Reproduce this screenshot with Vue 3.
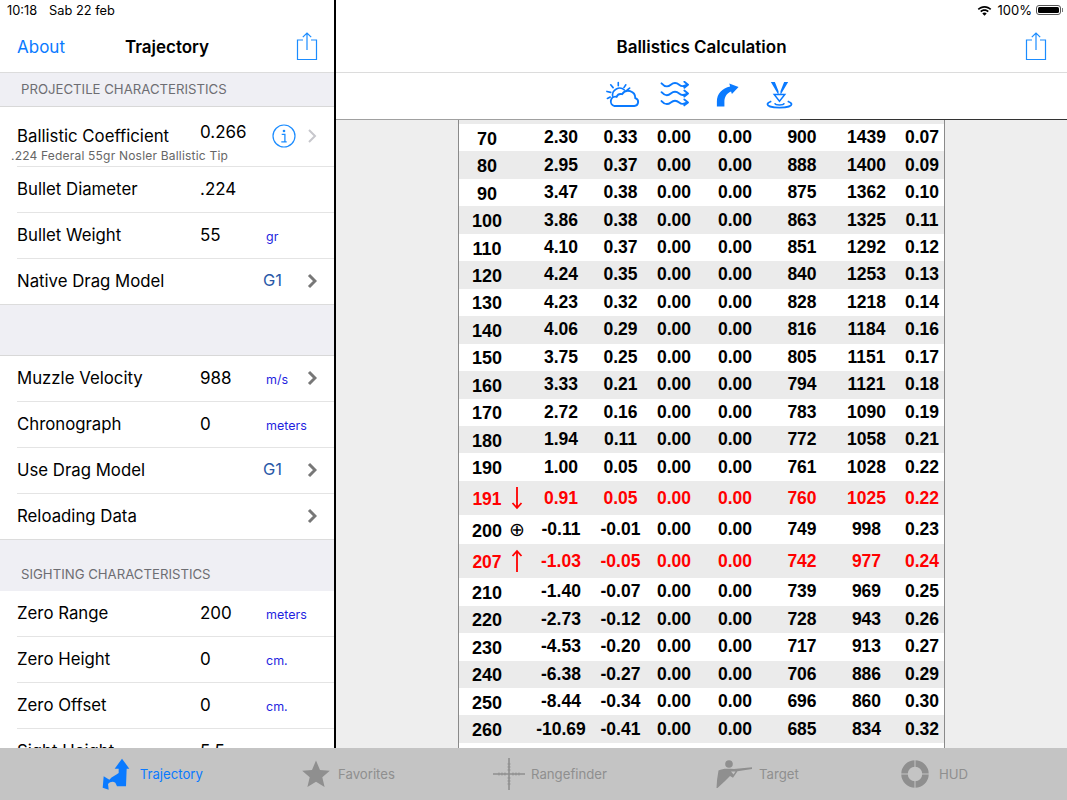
<script setup>
const groups1 = [
  { label: 'Bullet Diameter', value: '.224', unit: '' },
  { label: 'Bullet Weight', value: '55', unit: 'gr' },
]
const rows2 = [
  { label: 'Muzzle Velocity', value: '988', unit: 'm/s', chev: true },
  { label: 'Chronograph', value: '0', unit: 'meters' },
  { label: 'Use Drag Model', value: '', model: 'G1', chev: true },
  { label: 'Reloading Data', value: '', chev: true, last: true },
]
const rows3 = [
  { label: 'Zero Range', value: '200', unit: 'meters' },
  { label: 'Zero Height', value: '0', unit: 'cm.' },
  { label: 'Zero Offset', value: '0', unit: 'cm.' },
  { label: 'Sight Height', value: '5.5', unit: '' },
]
const table = [
  ['70','', '2.30','0.33','0.00','0.00','900','1439','0.07'],
  ['80','', '2.95','0.37','0.00','0.00','888','1400','0.09'],
  ['90','', '3.47','0.38','0.00','0.00','875','1362','0.10'],
  ['100','', '3.86','0.38','0.00','0.00','863','1325','0.11'],
  ['110','', '4.10','0.37','0.00','0.00','851','1292','0.12'],
  ['120','', '4.24','0.35','0.00','0.00','840','1253','0.13'],
  ['130','', '4.23','0.32','0.00','0.00','828','1218','0.14'],
  ['140','', '4.06','0.29','0.00','0.00','816','1184','0.16'],
  ['150','', '3.75','0.25','0.00','0.00','805','1151','0.17'],
  ['160','', '3.33','0.21','0.00','0.00','794','1121','0.18'],
  ['170','', '2.72','0.16','0.00','0.00','783','1090','0.19'],
  ['180','', '1.94','0.11','0.00','0.00','772','1058','0.21'],
  ['190','', '1.00','0.05','0.00','0.00','761','1028','0.22'],
  ['191','down', '0.91','0.05','0.00','0.00','760','1025','0.22','red'],
  ['200','⊕', '-0.11','-0.01','0.00','0.00','749','998','0.23','zero'],
  ['207','up', '-1.03','-0.05','0.00','0.00','742','977','0.24','red'],
  ['210','', '-1.40','-0.07','0.00','0.00','739','969','0.25'],
  ['220','', '-2.73','-0.12','0.00','0.00','728','943','0.26'],
  ['230','', '-4.53','-0.20','0.00','0.00','717','913','0.27'],
  ['240','', '-6.38','-0.27','0.00','0.00','706','886','0.29'],
  ['250','', '-8.44','-0.34','0.00','0.00','696','860','0.30'],
  ['260','', '-10.69','-0.41','0.00','0.00','685','834','0.32'],
  ['','', '','','','','','',''],
]
const tabs = [
  { name: 'Trajectory', active: true },
  { name: 'Favorites' },
  { name: 'Rangefinder' },
  { name: 'Target' },
  { name: 'HUD' },
]
</script>

<template>
  <div class="screen">
    <div class="main">
      <aside class="left">
        <header class="nav">
          <div class="status">
            <span>10:18</span><span class="date">Sab 22 feb</span>
          </div>
          <div class="navbar left-navbar">
            <span class="about">About</span>
            <span class="nav-title">Trajectory</span>
            <svg class="share" viewBox="0 0 22 28" width="22" height="28" fill="none" stroke="#1b8cff" stroke-width="1.2">
              <path d="M7 8H1.500V27.500H20.500V8H15" />
              <path d="M11 18V1M6.800 5.200L11 1l4.200 4.200" />
            </svg>
          </div>
        </header>
        <div class="list">
          <div class="section-head first">PROJECTILE CHARACTERISTICS</div>
          <div class="bc">
            <span class="label bc-label">Ballistic Coefficient</span>
            <span class="value bc-value">0.266</span>
            <svg class="info" viewBox="0 0 24 24" width="24" height="24">
              <circle cx="12" cy="12" r="11" fill="none" stroke="#1b8cff" stroke-width="1.2" />
              <circle cx="12" cy="7" r="1.300" fill="#1b8cff" />
              <path d="M9.700 10.400h3.200v7.400h1.800M9.300 17.800h5.400" fill="none" stroke="#1b8cff" stroke-width="1.300" />
            </svg>
            <svg class="chev light" viewBox="0 0 10 16" width="10" height="16"><path d="M2 2l6 6-6 6" fill="none" stroke="#c7c7cc" stroke-width="2" /></svg>
            <span class="bc-sub">.224 Federal 55gr Nosler Ballistic Tip</span>
          </div>
          <div v-for="r in groups1" :key="r.label" class="row">
            <span class="label">{{ r.label }}</span>
            <span class="value">{{ r.value }}</span>
            <span class="unit">{{ r.unit }}</span>
          </div>
          <div class="row last">
            <span class="label">Native Drag Model</span>
            <span class="value"></span>
            <span class="model">G1</span>
            <svg class="chev" viewBox="0 0 10 16" width="10" height="16"><path d="M2 2l6 6-6 6" fill="none" stroke="#777" stroke-width="3" /></svg>
          </div>
          <div class="gap"></div>
          <div v-for="r in rows2" :key="r.label" class="row" :class="{ last: r.last }">
            <span class="label">{{ r.label }}</span>
            <span class="value">{{ r.value }}</span>
            <span v-if="r.unit" class="unit">{{ r.unit }}</span>
            <span v-if="r.model" class="model">{{ r.model }}</span>
            <svg v-if="r.chev" class="chev" viewBox="0 0 10 16" width="10" height="16"><path d="M2 2l6 6-6 6" fill="none" stroke="#777" stroke-width="3" /></svg>
          </div>
          <div class="section-head second">SIGHTING CHARACTERISTICS</div>
          <div v-for="r in rows3" :key="r.label" class="row">
            <span class="label">{{ r.label }}</span>
            <span class="value">{{ r.value }}</span>
            <span class="unit">{{ r.unit }}</span>
          </div>
        </div>
      </aside>

      <section class="right">
        <header class="nav">
          <div class="status end">
            <svg class="wifi" viewBox="0 0 16 12" width="15" height="11" fill="#000">
              <path d="M8 1C5 1 2.600 2.200.6 4.100l1.300 1.400C3.500 4 5.600 3 8 3s4.500 1 6.100 2.500l1.300-1.400C13.400 2.200 11 1 8 1z" />
              <path d="M8 4.600c-1.900 0-3.500.7-4.700 1.900l1.300 1.400C5.500 7 6.700 6.500 8 6.500s2.500.5 3.400 1.400l1.300-1.400C11.500 5.300 9.900 4.600 8 4.600z" />
              <path d="M8 8.200c-1 0-1.800.4-2.400 1L8 11.600l2.400-2.400c-.6-.6-1.400-1-2.400-1z" />
            </svg>
            <span class="pct">100%</span>
            <span class="battery"><span class="fill"></span></span>
          </div>
          <div class="navbar right-navbar">
            <span class="nav-title">Ballistics Calculation</span>
            <svg class="share" viewBox="0 0 22 28" width="22" height="28" fill="none" stroke="#1b8cff" stroke-width="1.2">
              <path d="M7 8H1.500V27.500H20.500V8H15" />
              <path d="M11 18V1M6.800 5.200L11 1l4.200 4.200" />
            </svg>
          </div>
        </header>
        <div class="toolbar">
          <svg class="t-sun" viewBox="0 0 36 28" width="34" height="26.500" fill="none" stroke="#0a7aff" stroke-width="1.700" stroke-linecap="round">
            <path d="M13 1.500v3.500M5 4l2.500 3M1 11l4 1M1.500 18.500l3-1.500M21 4l-2 3M25 7.500l-2.500 2" />
            <path d="M7 16a7.500 7.500 0 0 1 12.500-6.500" />
            <path d="M9 26.500h21a4.300 4.300 0 0 0 1-8.400 7.600 7.600 0 0 0-14-4.200 5 5 0 0 0-5.800 2.800A5 5 0 0 0 9 26.500z" stroke-width="2" />
          </svg>
          <svg class="t-wind" viewBox="0 0 32 29" width="30" height="27" fill="none" stroke="#0a7aff" stroke-width="2" stroke-linecap="round" stroke-linejoin="round">
            <path d="M1.500 2.500c4 4.500 7 4 10 1.500s6-2.500 9 0 5 1.500 9 0M26 .8l4 3.200-4 3.200" />
            <path d="M1.500 12c4 4.500 7 4 10 1.500s6-2.500 9 0 5 1.500 9 0M26 10.300l4 3.200-4 3.200" />
            <path d="M1.500 21.500c4 4.500 7 4 10 1.500s6-2.500 9 0 5 1.500 9 0M26 19.800l4 3.200-4 3.200" />
          </svg>
          <svg class="t-arc" viewBox="0 0 26 28" width="23" height="25" fill="#0a7aff">
            <path d="M1 27.500V22C1 13 7 7 16 5L15 1.500 25.500 5.500 18 13.500 17 10.500C12 12.500 9.500 17 9.500 22v5.500z" />
          </svg>
          <svg class="t-impact" viewBox="0 0 28 28" width="27" height="28" fill="none" stroke="#0a7aff">
            <path d="M5 .5h4.200l3.800 9.500V14zM23 .5h-4.200L15 10v4z" fill="#0a7aff" stroke="none" />
            <path d="M8.500 13.500h11L14 20.500z" stroke-width="1.500" />
            <path d="M5.500 20.500C3 21.500 1.500 22.300 1.500 23.500c0 2 5.500 3.500 12.500 3.500s12.500-1.500 12.500-3.500c0-1.200-1.500-2-4-3" stroke-width="1.800" />
            <path d="M9 22.500c.5 1.200 2.500 1.800 5 1.800s4.500-.6 5-1.800" stroke-width="1.500" />
          </svg>
        </div>
        <div class="table-area">
          <div class="table">
            <div class="sliver"></div>
            <div v-for="(r, i) in table" :key="i" class="trow"
                 :class="{ odd: i % 2 === 1, red: r[9] === 'red', tall: r[9] === 'red', zero: r[9] === 'zero' }">
              <span class="c name">{{ r[0] }}</span>
              <span class="c mark">
                <svg v-if="r[1] === 'down'" viewBox="0 0 12 24" width="12" height="24" fill="none" stroke="#f00" stroke-width="1.800"><path d="M6 1v21M1.500 17L6 22l4.500-5" /></svg>
                <svg v-else-if="r[1] === 'up'" viewBox="0 0 12 24" width="12" height="24" fill="none" stroke="#f00" stroke-width="1.800"><path d="M6 23V2M1.500 7L6 2l4.500 5" /></svg>
                <template v-else>{{ r[1] }}</template>
              </span>
              <span v-for="n in 7" :key="n" class="c">{{ r[n + 1] }}</span>
            </div>
          </div>
        </div>
      </section>
    </div>

    <nav class="tabs">
      <div v-for="t in tabs" :key="t.name" class="tab" :class="[t.name.toLowerCase(), { active: t.active }]">
        <svg v-if="t.name === 'Trajectory'" viewBox="20 20 86 100" width="28.700" height="33.300" fill="#0a7aff">
          <path d="M80 25L102 55H94L92 108H65L60 97C52 92 44 95 38 101L40 118L22 112L25 78L42 88C50 78 62 75 70 68V55H58z" />
        </svg>
        <svg v-else-if="t.name === 'Favorites'" viewBox="0 0 28 28" width="28" height="28" fill="#8f8f8f">
          <path d="M14 .5l4 9.500 9.800.8-7.500 6.400 2.300 9.800L14 21.800 5.400 27l2.300-9.800L.2 10.800 10 10z" />
        </svg>
        <svg v-else-if="t.name === 'Rangefinder'" viewBox="0 0 32 32" width="32" height="32" fill="none" stroke="#8f8f8f">
          <path d="M16 0v32M0 16h32" stroke-width="1.600" />
          <path d="M6 14.500v3M9 14.500v3M12 14.500v3M20 14.500v3M23 14.500v3M26 14.500v3M14.500 6h3M14.500 9h3M14.500 12h3M14.500 20h3M14.500 23h3M14.500 26h3" stroke-width="1" />
        </svg>
        <svg v-else-if="t.name === 'Target'" viewBox="0 0 36 28" width="36" height="28" fill="#8f8f8f">
          <circle cx="13" cy="4" r="3.800" />
          <path d="M2.500 10.500C6 8.500 10 8.500 14 8.800l4 .2L36 7.300v1.800l-14.500 2.200-4.500 6.500-3-1.700-5.500 5.500L1.500 28H.5l.6-8.500z" />
          <path d="M15 11.500h4.500l-2 3z" fill="#c4c4c4" />
        </svg>
        <svg v-else viewBox="0 0 28 28" width="28" height="28" fill="none" stroke="#8f8f8f" stroke-width="6.500">
          <circle cx="14" cy="14" r="10.500" />
          <path d="M14 0v8M14 20v8M0 14h8M20 14h8" stroke="#c4c4c4" stroke-width="1" />
        </svg>
        <span class="tab-label">{{ t.name }}</span>
      </div>
    </nav>
  </div>
</template>

<style>
html, body { margin: 0; padding: 0; background: #fff; }
</style>

<style scoped>
.screen {
  width: 1067px;
  height: 800px;
  display: flex;
  flex-direction: column;
  overflow: hidden;
  font-family: Inter, "Noto Sans", sans-serif;
  color: #000;
}
.main { flex: 0 0 748px; height: 748px; display: flex; min-height: 0; }
.left {
  flex: 0 0 334px;
  width: 334px;
  display: flex;
  flex-direction: column;
  overflow: hidden;
  background: #fff;
}
.right {
  flex: 1;
  min-width: 0;
  border-left: 2px solid #000;
  display: flex;
  flex-direction: column;
  overflow: hidden;
}
.nav { height: 73px; flex: 0 0 73px; box-sizing: border-box; background: #fff; border-bottom: 1px solid #dcdcdc; display: flex; flex-direction: column; }
.status { height: 20px; flex: 0 0 20px; display: flex; align-items: center; padding-left: 7px; font-size: 12.800px; gap: 12px; }
.status.end { justify-content: flex-end; padding: 0 6px 0 0; gap: 4px; }
.wifi { margin-right: 2px; }
.pct { font-size: 13px; }
.battery { width: 25px; height: 10px; border: 1px solid #555; border-radius: 3px; box-sizing: border-box; padding: 1px; display: block; position: relative; }
.battery::after { content: ""; position: absolute; right: -3px; top: 2px; width: 1.500px; height: 4px; background: #777; }
.battery .fill { display: block; height: 100%; background: #000; border-radius: 1.500px; }
.navbar { flex: 1; display: flex; align-items: center; position: relative; padding-top: 2px; }
.left-navbar { padding-left: 17px; }
.about { font-size: 17px; color: #0a7aff; }
.nav-title { font-size: 17px; font-weight: 600; position: absolute; left: 0; right: 0; text-align: center; }
.share { position: absolute; right: 16px; top: 12px; }
.right-navbar .share { right: 20px; }
.list { flex: 1; overflow: hidden; }
.section-head {
  background: #efeff4;
  color: #6d6d72;
  font-size: 13.200px;
  padding-left: 21px;
  box-sizing: border-box;
  display: flex;
}
.section-head.first { height: 34px; align-items: center; border-bottom: 1px solid #d8d8d8; padding-bottom: 1px; }
.section-head.second { height: 51px; align-items: flex-end; padding-bottom: 9px; }
.bc { height: 60px; position: relative; display: block; }
.bc::after { content: ""; position: absolute; left: 17px; right: 0; bottom: 0; height: 1px; background: #e4e4e4; }
.bc-label { position: absolute; left: 17px; top: 18px; }
.info { position: absolute; left: 272px; top: 17px; }
.chev.light { position: absolute; left: 307px; top: 21px; }
.bc-sub { position: absolute; left: 11px; top: 41px; font-size: 12px; color: #666; letter-spacing: .2px; }
.row {
  height: 46px;
  box-sizing: border-box;
  margin-left: 17px;
  padding-bottom: 2px;
  border-bottom: 1px solid #e4e4e4;
  display: flex;
  align-items: center;
  position: relative;
}
.row.last { margin-left: 0; padding-left: 17px; border-bottom-color: #dcdcdc; }
.label { font-size: 16.800px; line-height: 22px; white-space: nowrap; }
.value { font-size: 17px; position: absolute; left: 183px; top: 12px; }
.row.last .value { left: 200px; }
.bc .value { left: 200px; top: 15px; }
.unit { position: absolute; left: 249px; top: 16px; font-size: 12.500px; color: #1f1fe0; }
.model { position: absolute; left: 246px; top: 11px; font-size: 16.500px; color: #2b5aa8; }
.row.last .model { left: 263px; }
.chev { position: absolute; right: 17px; top: 14px; }
.gap { height: 51px; background: #efeff4; border-bottom: 1px solid #d8d8d8; box-sizing: border-box; }
.right-navbar { justify-content: center; }
.toolbar {
  height: 47px;
  flex: 0 0 47px;
  box-sizing: border-box;
  background: #fff;
  border-bottom: 1px solid #a0a0a0;
  display: flex;
  align-items: center;
  padding: 0 0 3px 270px;
  position: relative;
}
.toolbar::after { content: ""; position: absolute; left: 464px; right: 0; bottom: -1px; height: 1px; background: #333; }
.t-wind { margin-left: 20px; }
.t-arc { margin-left: 26px; }
.t-impact { margin-left: 27px; }
.table-area {
  flex: 1;
  background: #eeeeee;
  overflow: hidden;
  padding-left: 122px;
}
.table {
  width: 487px;
  box-sizing: border-box;
  height: 100%;
  border-left: 1px solid #8a8a8a;
  border-right: 1px solid #8a8a8a;
  background: #fff;
}
.sliver { height: 4px; background: #ebebeb; }
.trow {
  height: 27.460px;
  display: grid;
  grid-template-columns: 45px 26px 62px 57px 50px 72px 62px 67px 44px;
  align-items: center;
  font-family: "Liberation Sans", Arial, sans-serif;
  font-weight: 700;
  font-size: 17.500px;
  background: #fff;
}
.trow.odd { background: #ebebeb; }
.trow.tall { height: 34.300px; color: #f00; }
.trow.zero { height: 28.700px; }
.c { text-align: center; white-space: nowrap; }
.name { padding-left: 11px; padding-top: 3px; font-size: 18px; }
.tall .name { font-size: 17.500px; }
.mark { font-size: 19px; font-weight: 400; line-height: 1; display: flex; justify-content: center; align-items: center; }
.tabs {
  flex: 0 0 52px;
  height: 52px;
  background: #c4c4c4;
  display: flex;
  position: relative;
  color: #8f8f8f;
}
.tab { position: absolute; top: 0; height: 52px; display: flex; align-items: center; gap: 9px; font-size: 13px; }
.tab.trajectory { left: 102px; }
.tab.favorites { left: 302px; gap: 8px; }
.tab.rangefinder { left: 493px; gap: 6px; }
.tab.target { left: 716px; gap: 7px; }
.tab.hud { left: 901px; gap: 10px; }
.tab.active { color: #0a7aff; }
.tab-label { font-size: 13.200px; }
</style>
